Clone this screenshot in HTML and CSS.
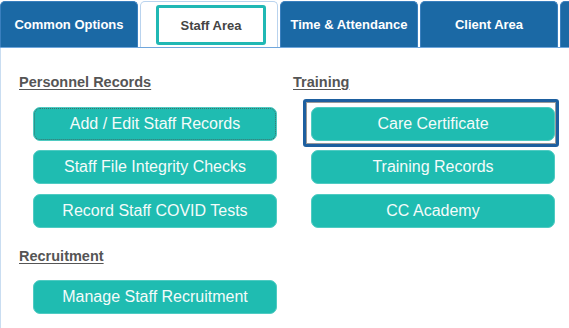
FILE: index.html
```html
<!DOCTYPE html>
<html lang="en">
<head>
  <meta charset="UTF-8">
  <title>Staff Area</title>
  <link rel="stylesheet" href="styles.css">
</head>
<body>
  <nav class="tabs">
    <a class="tab">Common Options</a>
    <a class="tab tab-active"><span class="tab-focus">Staff Area</span></a>
    <a class="tab">Time &amp; Attendance</a>
    <a class="tab">Client Area</a>
    <a class="tab">&nbsp;</a>
  </nav>

  <div class="panel">
    <div class="col col-left">
      <h2 class="section-title">Personnel Records</h2>
      <a class="btn btn-first btn-dotted">Add / Edit Staff Records</a>
      <a class="btn btn-9">Staff File Integrity Checks</a>
      <a class="btn btn-10">Record Staff COVID Tests</a>

      <h2 class="section-title section-second">Recruitment</h2>
      <a class="btn btn-after-second">Manage Staff Recruitment</a>
    </div>

    <div class="col col-right">
      <h2 class="section-title">Training</h2>
      <div class="focus-ring">
        <a class="btn">Care Certificate</a>
      </div>
      <a class="btn btn-3">Training Records</a>
      <a class="btn btn-10">CC Academy</a>
    </div>
  </div>
</body>
</html>
```

FILE: styles.css
```css
:root {
  --tab-blue: #1b69a5;
  --tab-line: #6fa6dc;
  --panel-edge: #c9ddf1;
  --teal: #1fbcb1;
  --teal-edge: #4fcbc2;
  --ring-blue: #1d5f9f;
  --heading: #555555;
}

* {
  margin: 0;
  padding: 0;
  box-sizing: border-box;
}

html,
body {
  height: 100%;
}

body {
  font-family: "Liberation Sans", Arial, sans-serif;
  background: #ffffff;
  overflow: hidden;
  display: flex;
  flex-direction: column;
}

/* Tab strip */
.tabs {
  display: flex;
  flex: 0 0 48px;
  gap: 2px;
  padding-top: 1px;
  border-bottom: 1px solid var(--tab-line);
  white-space: nowrap;
  overflow: hidden;
}

.tab {
  flex: 0 0 138px;
  display: flex;
  align-items: center;
  justify-content: center;
  background: var(--tab-blue);
  color: #ffffff;
  font-size: 13px;
  font-weight: bold;
  border-radius: 5px 5px 0 0;
  border: 1px solid #3a7fbe;
  border-bottom: none;
}

.tab-active {
  background: #ffffff;
  border-color: #b9d3ee;
  justify-content: flex-start;
  padding-left: 15px;
  align-items: flex-start;
  padding-top: 3px;
}

.tab-focus {
  display: flex;
  align-items: center;
  justify-content: center;
  width: 110px;
  height: 40px;
  border: 3px solid #20b8b4;
  border-radius: 3px;
  color: #444444;
}

/* Content */
.panel {
  display: flex;
  flex: 1;
  min-height: 0;
  border-left: 1px solid var(--panel-edge);
  padding-left: 18px;
  padding-top: 26px;
}

.col {
  display: flex;
  flex-direction: column;
  align-items: flex-start;
}

.col-left {
  width: 274px;
}

.section-title {
  font-size: 14.5px;
  font-weight: bold;
  line-height: 16px;
  color: var(--heading);
  text-decoration: underline;
  text-underline-offset: 2px;
}

.section-second {
  margin-top: 20px;
}

.btn {
  display: block;
  width: 244px;
  height: 34px;
  line-height: 32px;
  text-align: center;
  background: var(--teal);
  border: 1px solid var(--teal-edge);
  border-radius: 7px;
  color: #f4fbfa;
  font-size: 16px;
  text-decoration: none;
}

.col-left .btn {
  margin-left: 14px;
}

.btn-first { margin-top: 17px; }
.btn-9 { margin-top: 9px; }
.btn-10 { margin-top: 10px; }
.btn-3 { margin-top: 3px; margin-left: 18px; }
.btn-after-second { margin-top: 16px; }

.col-right .btn-10 {
  margin-left: 18px;
}

.btn-dotted {
  outline: 1px dotted #3d6e6a;
  outline-offset: -2px;
}

.focus-ring {
  margin-top: 9px;
  margin-left: 10px;
  width: 256px;
  height: 48px;
  padding: 5px 1px 3px 5px;
  border: 3px solid var(--ring-blue);
  border-radius: 3px;
  box-shadow: inset 0 0 0 1px #9a9a9a;
}
```
